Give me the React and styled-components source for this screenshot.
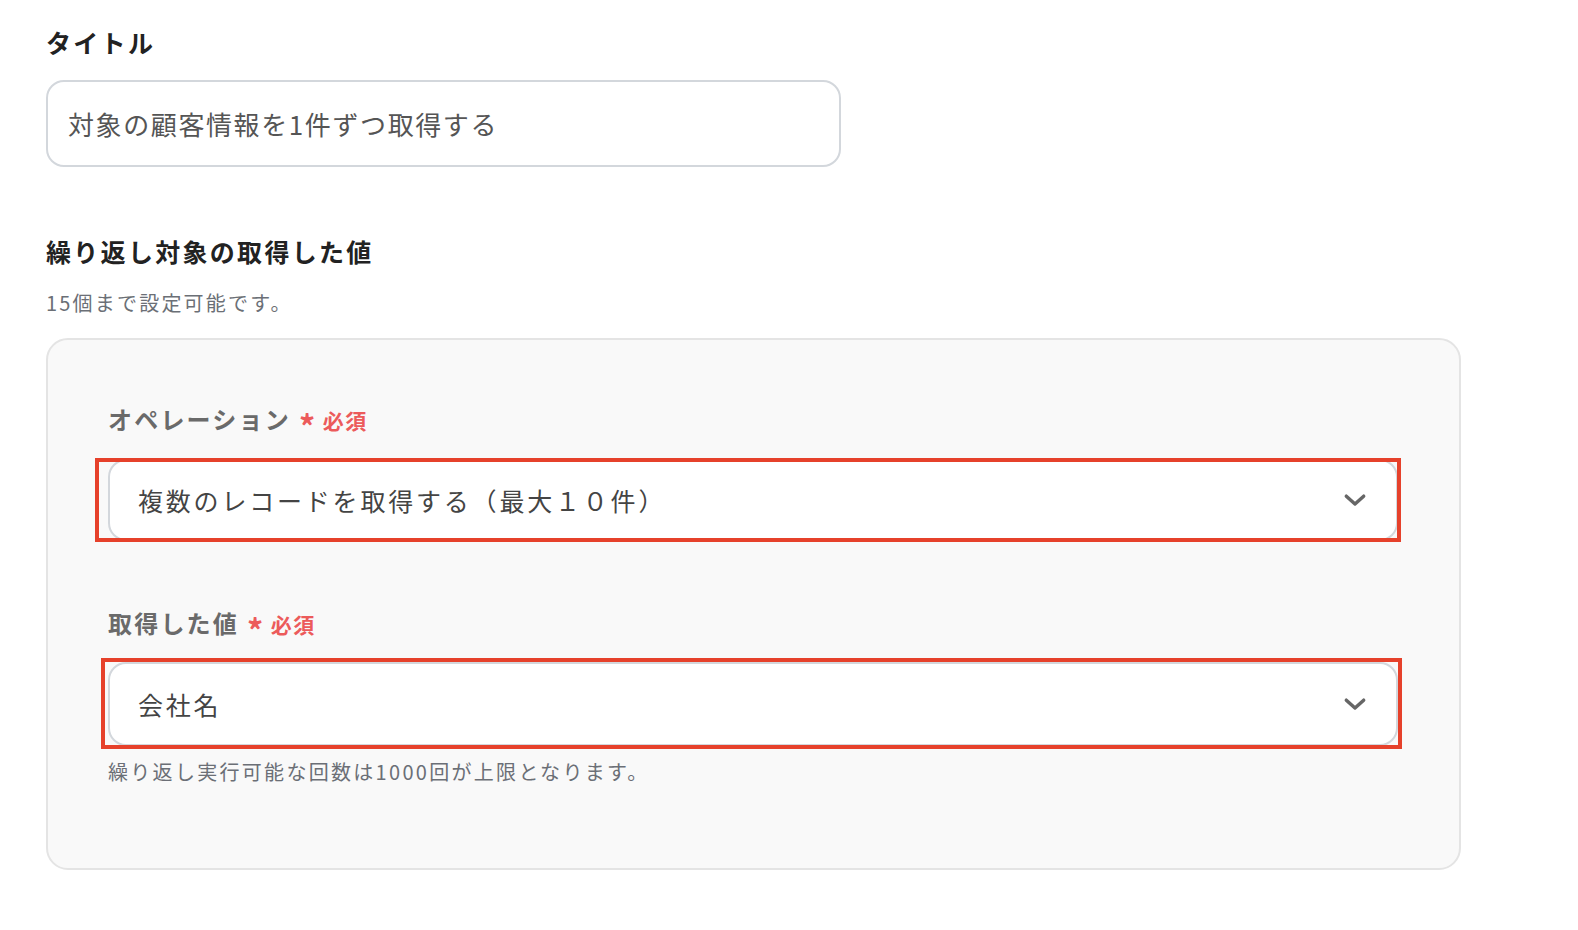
import styled, { createGlobalStyle } from "styled-components";

const GlobalStyle = createGlobalStyle`
  html, body {
    margin: 0;
    overflow: hidden;
  }
  body {
    background: #ffffff;
    font-family: "Noto Sans CJK JP", "Noto Sans", sans-serif;
  }
`;

const Page = styled.div`
  padding: 24px 0 0 46px;
  width: 1415px;
`;

const Heading = styled.h2`
  margin: 0;
  font-size: 25px;
  line-height: 36px;
  font-weight: 700;
  letter-spacing: 2.3px;
  color: #222;
`;

const TitleInput = styled.div`
  box-sizing: border-box;
  margin-top: 20px;
  width: 795px;
  height: 87px;
  border: 2px solid #d3d7dc;
  border-radius: 18px;
  padding: 0 20px;
  display: flex;
  align-items: center;
  font-size: 26px;
  letter-spacing: 1.6px;
  color: #555;
`;

const Section = styled.section`
  margin-top: 66px;
`;

const Note = styled.p`
  margin: ${({ $top }) => $top || "20px"} 0 0;
  font-size: 20px;
  line-height: 28px;
  letter-spacing: ${({ $ls }) => $ls || "2.3px"};
  color: #6b6f76;
`;

const Panel = styled.div`
  box-sizing: border-box;
  margin-top: 21px;
  width: 1415px;
  height: 532px;
  background: #f9f9f9;
  border: 2px solid #e4e4e4;
  border-radius: 22px;
  padding: 56px 61px 0 60px;
`;

const Field = styled.div`
  margin-top: ${({ $top }) => $top || "0"};
`;

const Label = styled.div`
  display: flex;
  align-items: center;
  gap: 8px;
  font-size: 24px;
  line-height: 36px;
  font-weight: 700;
  letter-spacing: 2.2px;
  color: #6a6a6a;
`;

const Required = styled.span`
  display: flex;
  align-items: center;
  gap: 6px;
  font-size: 21px;
  font-weight: 700;
  letter-spacing: 1.5px;
  color: #ec5b5b;
  padding-top: 3px;
`;

const Star = styled.span`
  font-size: 32px;
  line-height: 1;
  padding-top: 10px;
`;

const SelectWrap = styled.div`
  position: relative;
  margin-top: ${({ $top }) => $top};
`;

const Select = styled.div`
  box-sizing: border-box;
  height: ${({ $h }) => $h};
  background: #fff;
  border: 2px solid #d3d7dc;
  border-radius: 18px;
  padding: 0 28px 0 28px;
  display: flex;
  align-items: center;
  justify-content: space-between;
  font-size: 25px;
  letter-spacing: 2.8px;
  color: #444;
`;

const Highlight = styled.div`
  position: absolute;
  top: ${({ $t }) => $t}px;
  bottom: ${({ $b }) => $b}px;
  left: ${({ $l }) => $l}px;
  right: ${({ $r }) => $r}px;
  border: 4.5px solid #e6412b;
  pointer-events: none;
`;

const Chevron = () => (
  <svg width="26" height="26" viewBox="0 0 24 24" fill="none">
    <path
      d="M4 8.5l8 7.2 8-7.2"
      stroke="#666"
      strokeWidth="3.2"
      strokeLinecap="round"
      strokeLinejoin="round"
    />
  </svg>
);

function RequiredMark() {
  return (
    <Required>
      <Star>*</Star>必須
    </Required>
  );
}

export default function App() {
  return (
    <>
      <GlobalStyle />
      <Page>
        <Heading>タイトル</Heading>
        <TitleInput>対象の顧客情報を1件ずつ取得する</TitleInput>

        <Section>
          <Heading>繰り返し対象の取得した値</Heading>
          <Note $ls="2.2px">15個まで設定可能です。</Note>

          <Panel>
            <Field>
              <Label>
                オペレーション
                <RequiredMark />
              </Label>
              <SelectWrap $top="18px">
                <Select $h="82px">
                  複数のレコードを取得する（最大１０件）
                  <Chevron />
                </Select>
                <Highlight $t={-1} $b={-1} $l={-13} $r={-3} />
              </SelectWrap>
            </Field>

            <Field $top="59px">
              <Label>
                取得した値
                <RequiredMark />
              </Label>
              <SelectWrap $top="17px">
                <Select $h="84px">
                  会社名
                  <Chevron />
                </Select>
                <Highlight $t={-4} $b={-3} $l={-7} $r={-4} />
              </SelectWrap>
              <Note $top="12px">繰り返し実行可能な回数は1000回が上限となります。</Note>
            </Field>
          </Panel>
        </Section>
      </Page>
    </>
  );
}
